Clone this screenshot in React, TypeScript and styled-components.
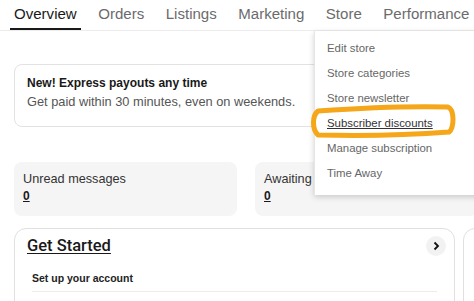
import React from "react";
import styled, { createGlobalStyle } from "styled-components";

const Global = createGlobalStyle`
  html, body { margin: 0; padding: 0; background: #fff; }
  body { font-family: "Liberation Sans", Arial, sans-serif; color: #111; overflow: hidden; }
  * { box-sizing: border-box; }
`;

const Page = styled.div`
  position: relative;
  width: 474px;
  height: 301px;
  overflow: hidden;
`;

const TabBar = styled.nav`
  display: flex;
  height: 31px;
  padding-left: 10px;
  border-bottom: 1px solid #ececec;
  gap: 13.5px;
`;

const Tab = styled.div<{ $active?: boolean }>`
  padding: 4px 4px 0;
  height: 30px;
  font-size: 15.05px;
  line-height: 20px;
  color: ${(p) => (p.$active ? "#191919" : "#6b6b6b")};
  border-bottom: 2px solid ${(p) => (p.$active ? "#191919" : "transparent")};
  white-space: nowrap;
`;

const Content = styled.main`
  display: flex;
  flex-direction: column;
  padding: 33px 0 0 14px;
`;

const Banner = styled.section`
  width: 440px;
  height: 63px;
  border: 1px solid #e2e2e2;
  border-radius: 8px;
  padding: 11px 12px;
  display: flex;
  flex-direction: column;
  gap: 5px;
`;

const BannerTitle = styled.div`
  font-size: 12px;
  font-weight: 700;
  color: #191919;
  line-height: 14px;
`;

const BannerText = styled.div`
  font-size: 12.8px;
  color: #555;
  line-height: 14px;
`;

const Stats = styled.div`
  display: grid;
  grid-template-columns: 223px 223px;
  gap: 18px;
  margin-top: 35px;
`;

const StatCard = styled.div`
  height: 54px;
  background: #f5f5f5;
  border-radius: 8px;
  padding: 10px 9px;
  display: flex;
  flex-direction: column;
  gap: 2px;
`;

const StatLabel = styled.div`
  font-size: 12.7px;
  color: #333;
  line-height: 15px;
  white-space: nowrap;
`;

const StatValue = styled.a`
  font-size: 12px;
  font-weight: 700;
  color: #191919;
  text-decoration: underline;
  line-height: 15px;
`;

const Cards = styled.div`
  display: flex;
  gap: 8px;
  margin-top: 12px;
`;

const Card = styled.section<{ $w: number }>`
  flex: none;
  width: ${(p) => p.$w}px;
  height: 90px;
  border: 1px solid #e0e0e0;
  border-radius: 12px;
  padding: 7px 12px 0 12px;
`;

const CardHead = styled.div`
  display: flex;
  align-items: center;
  justify-content: space-between;
`;

const CardTitle = styled.a`
  font-family: Roboto, "Liberation Sans", sans-serif;
  font-size: 16.5px;
  font-weight: 500;
  color: #191919;
  text-decoration: underline;
  text-underline-offset: 2px;
  line-height: 20px;
`;

const Chevron = styled.div`
  width: 20px;
  height: 20px;
  border-radius: 50%;
  background: #f2f2f2;
  display: flex;
  align-items: center;
  justify-content: center;
  margin-right: -4px;
`;

const SubSection = styled.div`
  margin: 16px 5px 0 5px;
  padding-bottom: 7px;
  border-bottom: 1px solid #ececec;
  font-size: 10.5px;
  font-weight: 700;
  color: #222;
`;

const Menu = styled.ul`
  position: absolute;
  left: 314px;
  top: 31px;
  width: 180px;
  height: 164px;
  margin: 0;
  padding: 9px 0 0 12px;
  list-style: none;
  background: #fff;
  box-shadow: 0 2px 6px rgba(0, 0, 0, 0.18);
  border-left: 1px solid #e6e6e6;
`;

const MenuItem = styled.li<{ $underline?: boolean }>`
  height: 25px;
  font-size: 11.4px;
  line-height: 16px;
  text-decoration: ${(p) => (p.$underline ? "underline" : "none")};
  color: ${(p) => (p.$underline ? "#333" : "#666")};
`;

const Highlight = styled.svg`
  position: absolute;
  left: 0;
  top: 0;
  pointer-events: none;
`;

export default function App() {
  const tabs = ["Overview", "Orders", "Listings", "Marketing", "Store", "Performance"];
  const items = [
    "Edit store",
    "Store categories",
    "Store newsletter",
    "Subscriber discounts",
    "Manage subscription",
    "Time Away",
  ];
  return (
    <Page>
      <Global />
      <TabBar>
        {tabs.map((t, i) => (
          <Tab key={t} $active={i === 0}>
            {t}
          </Tab>
        ))}
      </TabBar>
      <Content>
        <Banner>
          <BannerTitle>New! Express payouts any time</BannerTitle>
          <BannerText>Get paid within 30 minutes, even on weekends.</BannerText>
        </Banner>
        <Stats>
          <StatCard>
            <StatLabel>Unread messages</StatLabel>
            <StatValue>0</StatValue>
          </StatCard>
          <StatCard>
            <StatLabel>Awaiting shipment</StatLabel>
            <StatValue>0</StatValue>
          </StatCard>
        </Stats>
        <Cards>
          <Card $w={441}>
            <CardHead>
              <CardTitle>Get Started</CardTitle>
              <Chevron>
                <svg width="10" height="10" viewBox="0 0 10 10">
                  <path d="M3.5 1.5 L7 5 L3.5 8.5" fill="none" stroke="#111" strokeWidth="1.8" />
                </svg>
              </Chevron>
            </CardHead>
            <SubSection>Set up your account</SubSection>
          </Card>
          <Card $w={200} />
        </Cards>
      </Content>
      <Menu>
        {items.map((it) => (
          <MenuItem key={it} $underline={it === "Subscriber discounts"}>
            {it}
          </MenuItem>
        ))}
      </Menu>
      <Highlight width="474" height="301" viewBox="0 0 474 301">
        <path
          d="M318 111 C 360 108, 410 106, 448 107 C 455 110, 454 128, 449 132 C 410 135, 360 136, 318 135 C 312 129, 312 116, 318 111 Z"
          fill="none"
          stroke="#f6a619"
          strokeWidth="5"
          strokeLinejoin="round"
        />
      </Highlight>
    </Page>
  );
}
